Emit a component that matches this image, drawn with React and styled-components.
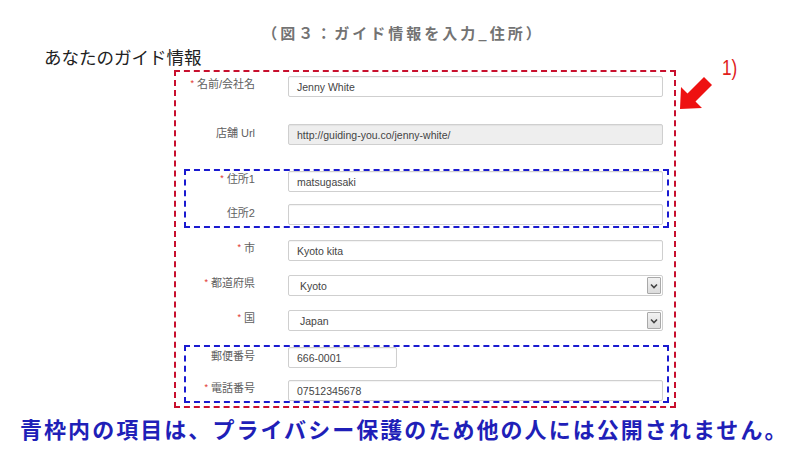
import styled, { createGlobalStyle } from "styled-components"

const GlobalStyle = createGlobalStyle`
    body {
        margin: 0;
        background: #ffffff;
        font-family: "Liberation Sans", "Noto Sans CJK JP", sans-serif;
    }
`

// data
const campos = {
    topo: [
        { rotulo: "名前/会社名", valor: "Jenny White", obrigatorio: true },
        { rotulo: "店舗 Url", valor: "http://guiding-you.co/jenny-white/", desativado: true, mt: 27 },
    ],
    endereco: [
        { rotulo: "住所1", valor: "matsugasaki", obrigatorio: true },
        { rotulo: "住所2", valor: "", mt: 12 },
    ],
    local: [
        { rotulo: "市", valor: "Kyoto kita", obrigatorio: true, mt: 12 },
        { rotulo: "都道府県", valor: "Kyoto", obrigatorio: true, select: true, mt: 14 },
        { rotulo: "国", valor: "Japan", obrigatorio: true, select: true, mt: 14 },
    ],
    contato: [
        { rotulo: "郵便番号", valor: "666-0001", curto: true },
        { rotulo: "電話番号", valor: "07512345678", obrigatorio: true, mt: 12 },
    ],
}

function Chevron() {
    return (
        <svg width="8" height="6" viewBox="0 0 8 6">
            <path d="M1 1.5 L4 4.5 L7 1.5" fill="none" stroke="#444" strokeWidth="1.6" />
        </svg>
    )
}

function Campo({ dados, larguraRotulo }) {
    const { rotulo, valor, obrigatorio, desativado, select, curto, mt } = dados
    return (
        <Row $labelW={larguraRotulo} $mt={mt || 0}>
            <Label>
                {obrigatorio && <Req>*</Req>}
                {rotulo}
            </Label>
            {select ? (
                <SelectBox>
                    <span>{valor}</span>
                    <SelectArrow><Chevron /></SelectArrow>
                </SelectBox>
            ) : (
                <Input $disabled={desativado} $short={curto}>{valor}</Input>
            )}
        </Row>
    )
}

export default function App() {
    return (
        <Page>
            <GlobalStyle />
            <Title>（図３：ガイド情報を入力_住所）</Title>
            <Heading>あなたのガイド情報</Heading>

            <FormWrap>
                <RedBox>
                    {campos.topo.map((c, i) => <Campo key={i} dados={c} larguraRotulo={79} />)}
                    <BlueBox $mt={24}>
                        {campos.endereco.map((c, i) => <Campo key={i} dados={c} larguraRotulo={69} />)}
                    </BlueBox>
                    {campos.local.map((c, i) => <Campo key={i} dados={c} larguraRotulo={79} />)}
                    <BlueBox $mt={14} $pb={0}>
                        {campos.contato.map((c, i) => <Campo key={i} dados={c} larguraRotulo={69} />)}
                    </BlueBox>
                </RedBox>

                <Arrow width="34" height="33" viewBox="0 0 34 33">
                    <polygon points="0,32 1,10 7.5,16.5 24,0 32,8 15.5,24.5 22,31" fill="#ee1111" />
                </Arrow>
                <Marker>1)</Marker>
            </FormWrap>

            <Note>青枠内の項目は、プライバシー保護のため他の人には公開されません。</Note>
        </Page>
    )
}

const Page = styled.div`
    width: 800px;
    height: 450px;
    overflow: hidden;
`

const Title = styled.div`
    padding-top: 24px;
    text-align: center;
    font-family: "Noto Sans CJK JP", sans-serif;
    font-size: 15px;
    line-height: 17px;
    font-weight: 700;
    letter-spacing: 3px;
    color: #737373;
    padding-left: 6px;
`

const Heading = styled.h2`
    margin: 5px 0 0 44px;
    font-family: "Noto Sans CJK JP", sans-serif;
    font-size: 17.5px;
    line-height: 22px;
    font-weight: 400;
    color: #222;
`

const FormWrap = styled.div`
    position: relative;
    margin: 2px 0 0 174px;
    width: 502px;
`

const RedBox = styled.div`
    display: flex;
    flex-direction: column;
    border: 2px dashed #c8102e;
    padding: 4px 0 3px 0;
`

const BlueBox = styled.div`
    display: flex;
    flex-direction: column;
    margin: ${p => p.$mt}px 0 0 8px;
    width: 485px;
    box-sizing: border-box;
    border: 2px dashed #1a1ad0;
    padding-bottom: ${p => (p.$pb === undefined ? 1 : p.$pb)}px;
`

const Row = styled.div`
    display: grid;
    grid-template-columns: ${p => p.$labelW}px 375px;
    column-gap: 33px;
    align-items: center;
    margin-top: ${p => p.$mt}px;
`

const Label = styled.div`
    text-align: right;
    font-size: 11px;
    line-height: 14px;
    color: #606060;
    margin-top: -4px;
`

const Req = styled.span`
    color: #e0302a;
    font-size: 9px;
    margin-right: 3px;
    position: relative;
    top: -2px;
`

const Input = styled.div`
    box-sizing: border-box;
    height: 21px;
    width: ${p => (p.$short ? "109px" : "100%")};
    padding: 0 8px;
    display: flex;
    align-items: center;
    font-size: 10.5px;
    color: #444;
    background: ${p => (p.$disabled ? "#eeeeee" : "#ffffff")};
    border: 1px solid #cfcfcf;
    border-radius: 2px;
    box-shadow: inset 0 1px 1px rgba(0, 0, 0, 0.05);
`

const SelectBox = styled.div`
    box-sizing: border-box;
    height: 21px;
    display: flex;
    align-items: center;
    justify-content: space-between;
    padding: 0 1px 0 11px;
    font-size: 10.5px;
    color: #444;
    background: #ffffff;
    border: 1px solid #cfcfcf;
    border-radius: 2px;
`

const SelectArrow = styled.div`
    width: 14px;
    height: 17px;
    display: flex;
    align-items: center;
    justify-content: center;
    background: linear-gradient(#f2f2f2, #dcdcdc);
    border: 1px solid #a9a9a9;
    box-sizing: border-box;
    border-radius: 1px;
`

const Arrow = styled.svg`
    position: absolute;
    left: 506px;
    top: 7px;
`

const Marker = styled.div`
    position: absolute;
    left: 548px;
    top: -14px;
    font-family: "Liberation Sans", sans-serif;
    font-size: 22px;
    line-height: 24px;
    color: #e0201a;
    transform: scaleX(0.78);
    transform-origin: left;
`

const Note = styled.div`
    margin: 8px 0 0 20px;
    font-family: "Noto Sans CJK JP", sans-serif;
    font-size: 22px;
    line-height: 24px;
    font-weight: 700;
    letter-spacing: 2.05px;
    color: #1f1fb8;
    white-space: nowrap;
`
